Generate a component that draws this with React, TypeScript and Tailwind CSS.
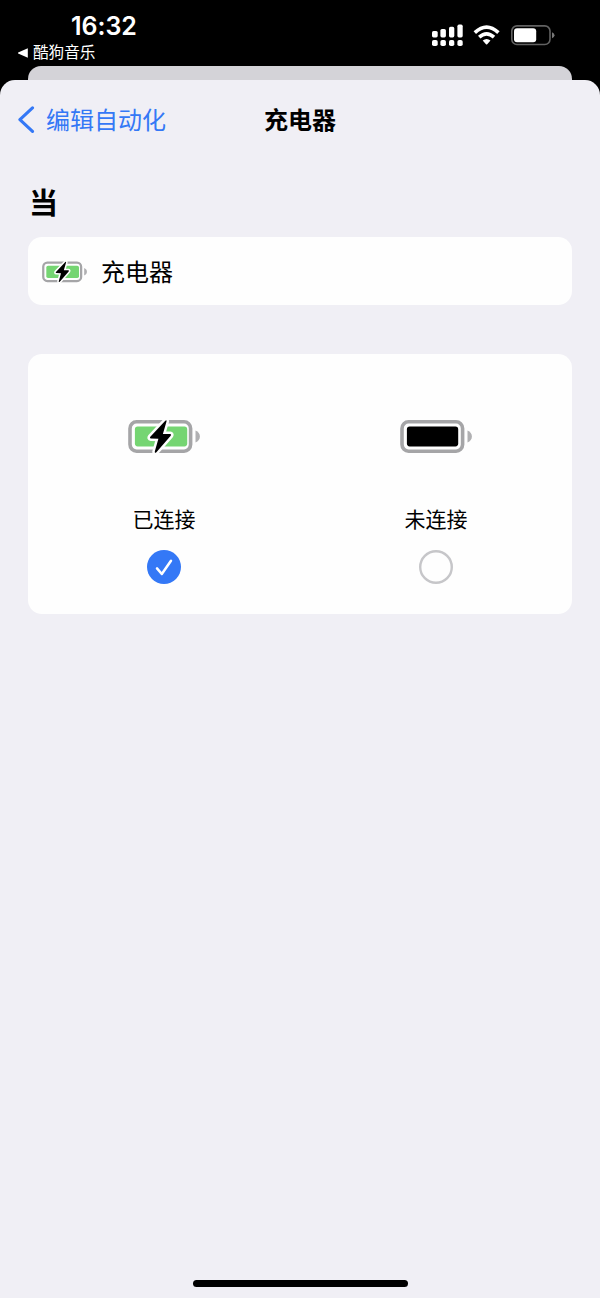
import React from 'react';

function Battery({ className, charging = false }: { className: string; charging?: boolean }) {
  return (
    <svg className={className} viewBox="0 0 72 36" fill="none" aria-hidden="true">
      <rect x="2" y="3.8" width="60.6" height="29.4" rx="6.6" stroke="#a5a5a7" strokeWidth="3.6" />
      <path d="M67.5 12.5C70.3 13.6 71.9 15.9 71.9 18.5S70.3 23.4 67.5 24.5Z" fill="#b0b0b2" />
      <rect x="6.9" y="8.6" width={charging ? 52.3 : 51.3} height="19.8" rx="2.8" fill={charging ? '#75d572' : '#000'} />
      {charging && (
        <path
          d="M37.3 2.8 22.3 18.7Q21.2 20.3 22.9 20.5L30.4 20.7 26.8 33.6Q26.6 35.6 28.4 34.2L42.7 17.8Q43.8 16.2 42 16.1L34.9 15.9 38.5 3.6Q38.8 1.6 37.3 2.8Z"
          fill="#000"
          stroke="#fefefe"
          strokeWidth="5"
          strokeLinejoin="round"
          paintOrder="stroke"
        />
      )}
    </svg>
  );
}

function StatusIcons() {
  return (
    <svg className="h-[24px] w-[124px]" viewBox="431 23 124 24" fill="#fff" aria-hidden="true">
      <rect x="432" y="31" width="5.7" height="6.4" rx="1.6" />
      <rect x="440.4" y="29" width="5.5" height="8.4" rx="1.6" />
      <rect x="449" y="26.8" width="5.3" height="10.6" rx="1.6" />
      <rect x="457.4" y="24.6" width="5.3" height="12.8" rx="1.6" />
      <rect x="432" y="40" width="5.7" height="6" rx="1.8" />
      <rect x="440.4" y="40" width="5.5" height="6" rx="1.8" />
      <rect x="449" y="40" width="5.3" height="6" rx="1.8" />
      <rect x="457.4" y="40" width="5.3" height="6" rx="1.8" />
      <path d="M474.8 32.6Q486.6 21.7 498.4 32.6" fill="none" stroke="#fff" strokeWidth="3.6" />
      <path d="M479.2 37.1Q486.6 30.5 494 37.1" fill="none" stroke="#fff" strokeWidth="3.6" />
      <path d="M482.7 40.6Q486.6 37.4 490.5 40.6L487.2 44.3Q486.6 44.9 486 44.3Z" />
      <rect x="511.8" y="25.9" width="38.2" height="18.6" rx="5.2" fill="none" stroke="#626262" strokeWidth="1.6" />
      <rect x="514" y="28.2" width="22.2" height="14" rx="3" />
      <path d="M552 32.2Q554.5 33 554.5 35.2T552 38.2Z" fill="#777" />
    </svg>
  );
}

function StatusBar() {
  return (
    <header className="flex h-[66px] shrink-0 justify-between text-white">
      <div className="flex flex-col pl-[18px]">
        <span className="mt-[11px] pl-[53px] font-['Inter'] text-[25px] font-semibold leading-[30px] tracking-[-0.05px]">16:32</span>
        <div className="flex h-[23px] items-center gap-[5px]">
          <svg className="h-2.5 w-2.5" viewBox="0 0 10 10" aria-hidden="true">
            <path d="M9.8.3v9.4L.2 5.6q-.6-.6 0-1.2Z" fill="#fff" />
          </svg>
          <span className="text-[15.6px] leading-[23px]">酷狗音乐</span>
        </div>
      </div>
      <div className="pr-[45px] pt-[23px]">
        <StatusIcons />
      </div>
    </header>
  );
}

function Option({ label, selected = false }: { label: string; selected?: boolean }) {
  return (
    <div className="flex flex-1 flex-col items-center pt-[64px]">
      <Battery className="h-9 w-[72px]" charging={selected} />
      <span className="mt-[50px] text-[21px] leading-[32px]">{label}</span>
      {selected ? (
        <span className="mt-[14px] flex size-[34px] rounded-full bg-[#3478f6]">
          <svg className="size-[34px]" viewBox="0 0 34 34" fill="none" aria-hidden="true">
            <path d="M10 18.4 14.8 24 24 10.7" stroke="#fff" strokeWidth="2.5" strokeLinecap="round" strokeLinejoin="round" />
          </svg>
        </span>
      ) : (
        <svg className="mt-[14px] size-[34px]" viewBox="0 0 34 34" fill="none" aria-hidden="true">
          <circle cx="17" cy="17" r="15.8" stroke="#c6c6c9" strokeWidth="2.4" />
        </svg>
      )}
    </div>
  );
}

export default function App() {
  return (
    <div className="flex h-[1298px] w-[600px] flex-col overflow-hidden bg-black font-['Liberation_Sans','Noto_Sans_CJK_SC',sans-serif] text-black">
      <StatusBar />
      <div className="mx-7 h-[14px] shrink-0 rounded-t-[13px] bg-[#d4d3d8]" />
      <main className="flex flex-1 flex-col rounded-t-[15px] bg-[#f0eff5]">
        <nav className="grid h-[79px] grid-cols-[1fr_auto_1fr] items-center text-[24px]">
          <button className="flex items-center gap-[11px] pl-[17px] text-[#3478f6]">
            <svg className="h-7 w-[18px]" viewBox="0 0 18 28" fill="none" aria-hidden="true">
              <path d="M15.5 1.9 2.9 13.6l12.6 11.8" stroke="currentColor" strokeWidth="3.1" strokeLinecap="round" strokeLinejoin="round" />
            </svg>
            <span className="pt-0.5">编辑自动化</span>
          </button>
          <h1 className="pt-0.5 font-bold">充电器</h1>
        </nav>
        <h2 className="mt-[23px] px-[29px] text-[29px] font-bold leading-[44px]">当</h2>
        <section className="mx-7 mt-[11px] flex h-[68px] items-center rounded-[14px] bg-[#fefefe] pl-[14px]">
          <Battery className="h-[23px] w-[45px]" charging />
          <span className="ml-[14px] pt-1 text-[24px]">充电器</span>
        </section>
        <section className="mx-7 mt-[49px] flex h-[260px] rounded-[14px] bg-[#fefefe]">
          <Option label="已连接" selected />
          <Option label="未连接" />
        </section>
        <div className="mb-[11px] mt-auto h-[7px] w-[215px] self-center rounded-full bg-black" />
      </main>
    </div>
  );
}
